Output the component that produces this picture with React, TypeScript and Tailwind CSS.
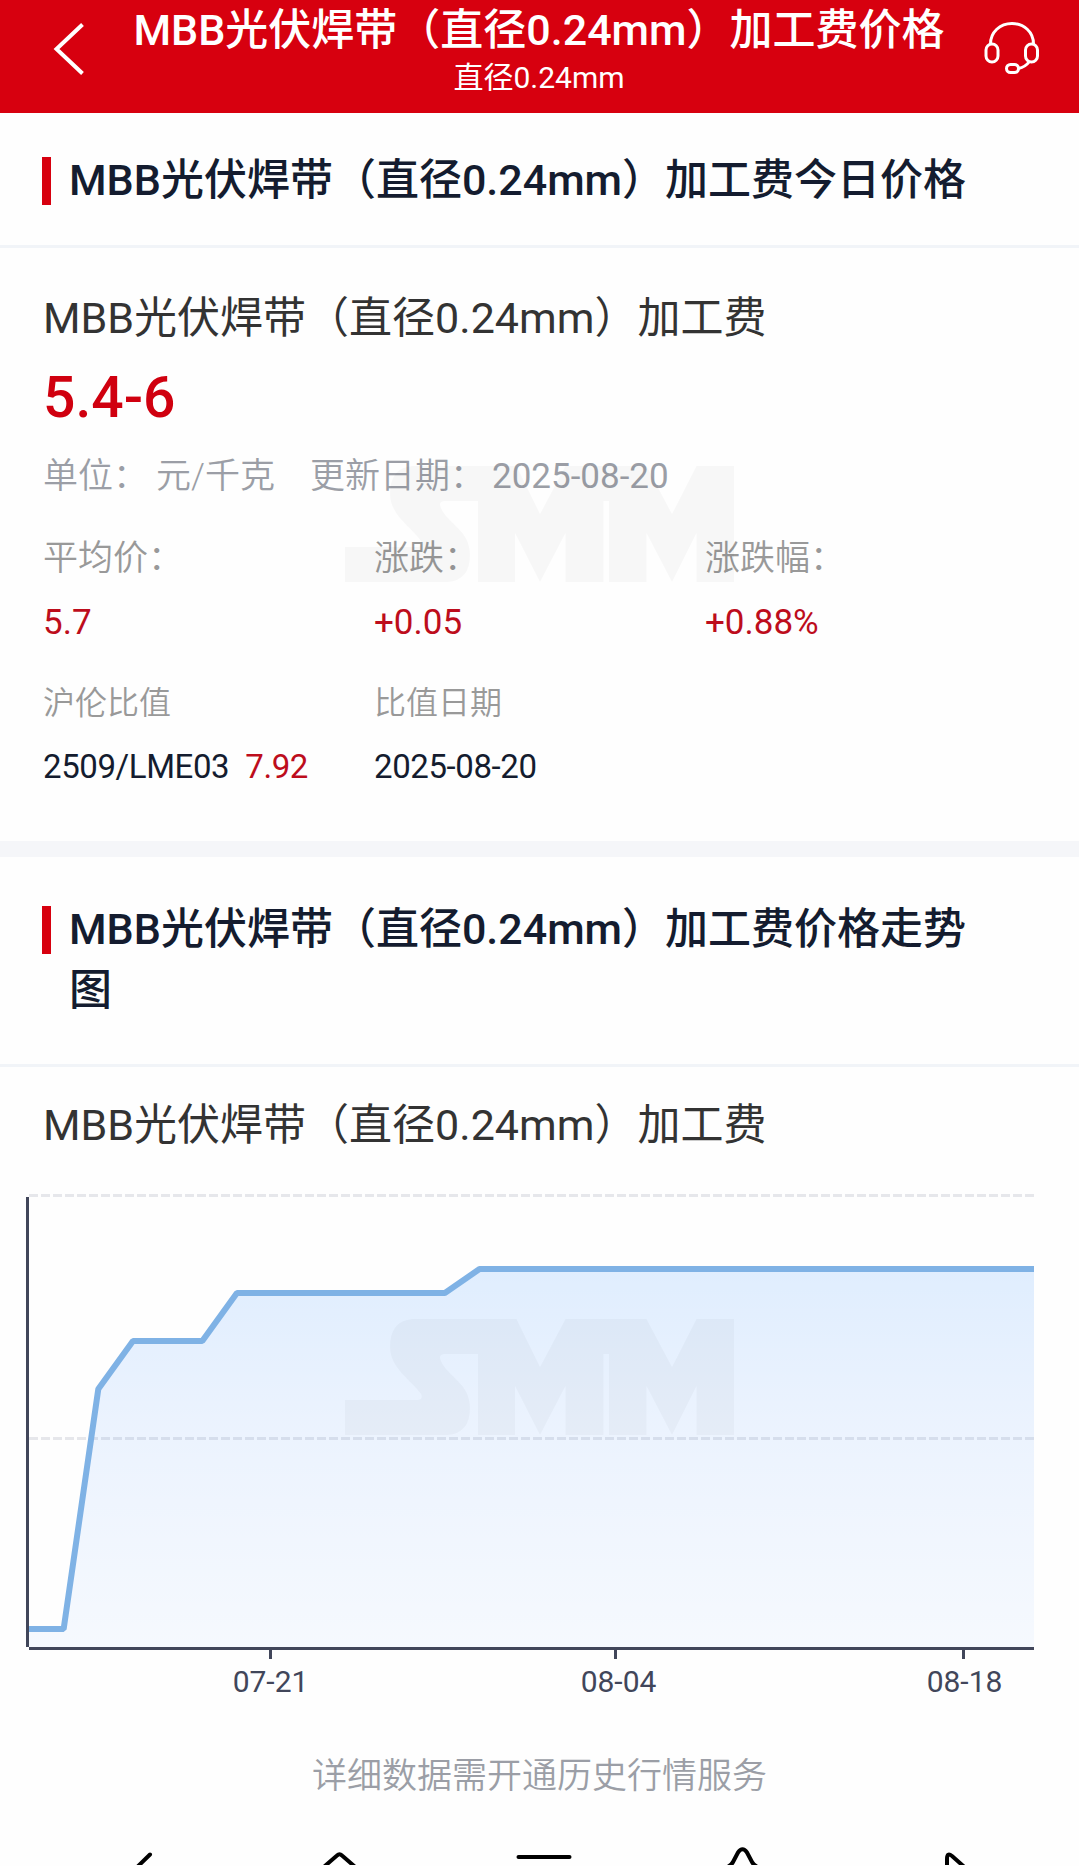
import type { ReactNode } from "react";

const PRODUCT = "MBB光伏焊带（直径0.24mm）加工费";

// trading-day index (0-29) and y position of each turning point of the line
const trend: [number, number][] = [
  [0, 435],
  [1, 435],
  [2, 195],
  [3, 147],
  [5, 147],
  [6, 99],
  [12, 99],
  [13, 75],
  [29, 75],
];

const ticks = [
  { x: 270.5, labelX: 270.5, label: "07-21" },
  { x: 615.5, labelX: 618.5, label: "08-04" },
  { x: 963.5, labelX: 964.5, label: "08-18" },
];

export default function App() {
  return (
    <div className="h-[1866px] w-[1079px] overflow-hidden bg-[#fefefe] font-['Roboto','Noto_Sans_CJK_SC',sans-serif] text-[#141c2f]">
      <Header />

      <SectionTitle className="pt-[37px] pb-[34px]">{PRODUCT}今日价格</SectionTitle>
      <PriceDetail />

      <div className="h-4 bg-[#f5f6f9]" />

      <SectionTitle className="pt-[42px] pb-[43px]">{PRODUCT}价格走势图</SectionTitle>
      <h3 className="mt-7 pl-[43px] text-[43px] leading-[60px] text-[#333]">{PRODUCT}</h3>
      <div className="relative mt-[39px]">
        <TrendChart />
        <Watermark className="absolute top-[125px] left-[345px]" />
      </div>
      <p className="mt-[39px] text-center text-[35px] leading-[48px] font-[350] text-[#9b9ea6]">
        详细数据需开通历史行情服务
      </p>

      <SystemNav />
    </div>
  );
}

function Header() {
  return (
    <header className="flex h-[113px] bg-[#d7000f] text-white">
      <svg className="mt-5 ml-[50px] h-[58px] w-10" viewBox="50 20 40 58" fill="none" stroke="currentColor" strokeWidth="4">
        <path d="M82.5 24.5 56.5 49l26 24.5" />
      </svg>
      <div className="ml-[9px] w-[880px] pt-[9px] text-center whitespace-nowrap">
        <h1 className="text-[43px] leading-[42px] font-medium">{PRODUCT}价格</h1>
        <p className="mt-[7px] text-[30px] leading-10">直径0.24mm</p>
      </div>
      <svg className="mt-5 ml-px h-[58px] w-[62px]" viewBox="980 20 62 58" fill="none" stroke="currentColor" strokeWidth="3">
        <path d="M990.5 44c0-12 9.500-20.500 21.500-20.500s21.500 8.500 21.500 20.500" />
        <rect x="986" y="44" width="12" height="18" rx="6" />
        <rect x="1025.500" y="44" width="12" height="18" rx="6" />
        <rect x="1006.500" y="64.500" width="12" height="8" rx="4" />
        <path d="M1018.500 68.500c4.500-1 8-3 10.500-6.500" />
      </svg>
    </header>
  );
}

function SectionTitle({ className, children }: { className: string; children: ReactNode }) {
  return (
    <div className={`flex border-b-[3px] border-[#f1f4f8] pr-[80px] pl-[42px] ${className}`}>
      <span className="mt-[7px] h-12 w-[9px] shrink-0 bg-[#d7000f]" />
      <h2 className="ml-[18px] text-[43px] leading-[61px] font-medium">{children}</h2>
    </div>
  );
}

function PriceDetail() {
  return (
    <section className="relative pt-10 pb-[50px] pl-[43px]">
      <Watermark className="absolute top-[218px] left-[345px]" />
      <h3 className="text-[43px] leading-[60px] text-[#333]">{PRODUCT}</h3>
      <p className="mt-3 text-[57px] leading-[76px] font-medium text-[#d0000f]">5.4-6</p>
      <div className="mt-[17px] flex text-[35px] leading-[48px] font-[350] text-[#9b9ea6]">
        <span className="w-[113px]">单位：</span>
        <span className="w-[154px]">元/千克</span>
        <span className="w-[182px]">更新日期：</span>
        <span className="font-normal">2025-08-20</span>
      </div>
      <div className="mt-[34px] grid w-[993px] grid-cols-3 text-[35px] leading-[48px]">
        <Cell label="平均价：">5.7</Cell>
        <Cell label="涨跌：">+0.05</Cell>
        <Cell label="涨跌幅：">+0.88%</Cell>
      </div>
      <div className="mt-8 grid w-[993px] grid-cols-3 leading-[48px]">
        <div>
          <p className="text-[32px] font-[350] text-[#999]">沪伦比值</p>
          <p className="mt-4 text-[33px] tracking-[-0.4px]">
            2509/LME03<span className="ml-4 text-[#bd0d1c]">7.92</span>
          </p>
        </div>
        <div>
          <p className="text-[32px] font-[350] text-[#999]">比值日期</p>
          <p className="mt-4 text-[33px] tracking-[-0.4px]">2025-08-20</p>
        </div>
      </div>
    </section>
  );
}

function Cell({ label, children }: { label: string; children: ReactNode }) {
  return (
    <div>
      <p className="font-[350] text-[#999]">{label}</p>
      <p className="mt-4 text-[#bd0d1c]">{children}</p>
    </div>
  );
}

function TrendChart() {
  const step = 1005 / 29;
  const line = trend.map(([day, y]) => `${29 + day * step},${y}`).join(" ");

  return (
    <svg className="block h-[520px] w-[1079px]" viewBox="0 0 1079 520">
      <defs>
        <linearGradient id="area" x1="0" y1="0" x2="0" y2="1">
          <stop offset="0" stopColor="#0074ff" stopOpacity="0.12" />
          <stop offset="0.4" stopColor="#0068ff" stopOpacity="0.075" />
          <stop offset="1" stopColor="#0068ff" stopOpacity="0.033" />
        </linearGradient>
      </defs>
      <g stroke="#e6e7eb" strokeWidth="3" strokeDasharray="9 3">
        <path d="M29 1.500H1034" />
        <path d="M29 244.500H1034" />
      </g>
      <polygon points={`29,453 ${line} 1034,453`} fill="url(#area)" />
      <polyline points={line} fill="none" stroke="#7fb2e5" strokeWidth="6" strokeLinejoin="bevel" />
      <g stroke="#41465a" strokeWidth="3">
        <path d="M27.500 3V453" />
        <path d="M29 454.500H1034" />
        {ticks.map((tick) => (
          <path key={tick.label} d={`M${tick.x} 456v9`} />
        ))}
      </g>
      <g fill="#41465a" fontSize="30" textAnchor="middle">
        {ticks.map((tick) => (
          <text key={tick.label} x={tick.labelX} y="498">
            {tick.label}
          </text>
        ))}
      </g>
    </svg>
  );
}

function Watermark({ className }: { className: string }) {
  return (
    <svg className={`h-[116px] w-[389px] ${className}`} viewBox="0 0 389 116" fill="#000" fillOpacity="0.028">
      <path d="M171.500 0 195 48 220.500 0H301.500L327 48 351.500 0H389V116H351.500V67L327 116 301.500 67V116H264V35H258.500V116H220.500V67L195 116 170 67V116H133V35H99Q93 36 96 42C103 58 125 64 125 89Q125 114 103 116H0V81H70Q79 81 76 75C66 61 45 49 45 28Q45 2 67 0Z" />
    </svg>
  );
}

function SystemNav() {
  return (
    <svg
      className="mt-[46px] block h-[18px] w-[1079px]"
      viewBox="0 1848 1079 18"
      fill="none"
      stroke="#000"
      strokeWidth="4"
      strokeLinecap="round"
      strokeLinejoin="round"
    >
      <path d="M150 1855.500 128 1877" />
      <path d="M318 1873 337 1856.500Q339.500 1854 342 1856.500L361 1873" />
      <path d="M518.500 1858H569.500" />
      <path d="M725 1869Q731 1867 733 1863L738 1853.500Q742.500 1847 747 1853.500L752 1863Q754 1867 760 1869" />
      <path d="M947 1880V1860Q947 1853 952 1857L970 1873" />
    </svg>
  );
}
